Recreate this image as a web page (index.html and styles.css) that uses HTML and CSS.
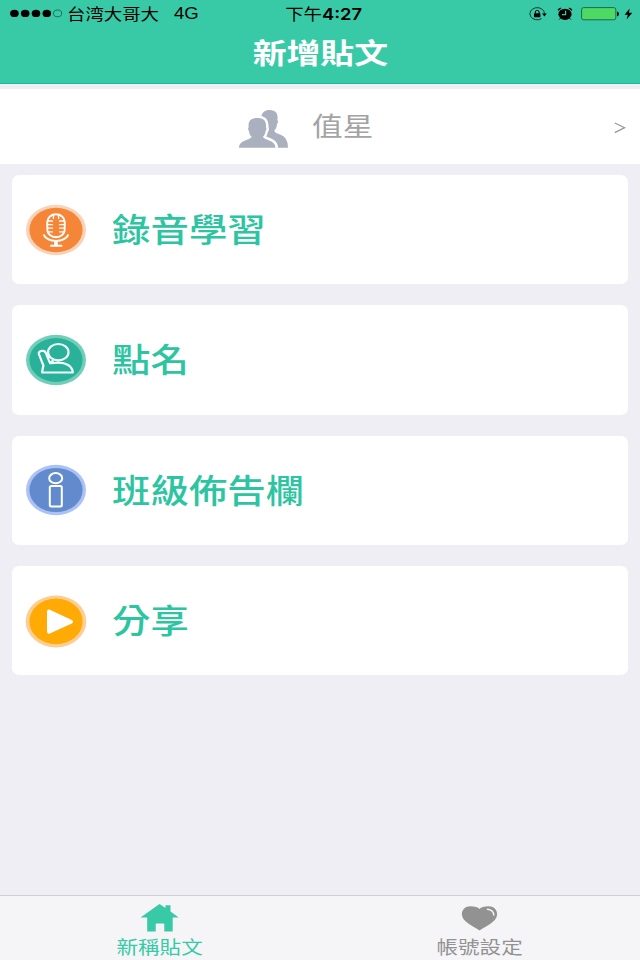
FILE: index.html
```html
<!DOCTYPE html>
<html lang="zh-Hant">
<head>
    <meta charset="UTF-8">
    <meta name="viewport" content="width=device-width, initial-scale=1.0">
    <title>新增貼文</title>
    <link rel="stylesheet" href="styles.css">
</head>
<body>
    <header class="header">
        <div class="status-bar">
            <div class="status-left">
                <svg class="signal" width="54" height="10" viewBox="0 0 54 10">
                    <ellipse cx="4.4" cy="4.4" rx="4.3" ry="3.6"/>
                    <ellipse cx="15.2" cy="4.4" rx="4.3" ry="3.6"/>
                    <ellipse cx="26" cy="4.4" rx="4.3" ry="3.6"/>
                    <ellipse cx="36.8" cy="4.4" rx="4.3" ry="3.6"/>
                    <ellipse cx="47.6" cy="4.4" rx="4.1" ry="3.4" fill="none" stroke="#12463a" stroke-width="0.7"/>
                </svg>
                <span class="carrier">台湾大哥大</span>
                <span class="network">4G</span>
            </div>
            <span class="time"><span class="ampm">下午</span>4:27</span>
            <div class="status-right">
                <svg width="18" height="14" viewBox="0 0 18 14">
                    <path d="M12.6 11.6A7.3 6.1 0 1 1 15.5 6.8" fill="none" stroke="#0b2a22" stroke-width="0.9"/>
                    <path d="M13 6.4h4.8l-2.4 3z"/>
                    <rect x="5" y="6.2" width="6.4" height="4" rx="0.5"/>
                    <path d="M6.3 6.5V5a1.9 1.6 0 0 1 3.8 0v1.5" fill="none" stroke="#000" stroke-width="1"/>
                </svg>
                <svg class="alarm" width="16" height="14" viewBox="0 0 16 14">
                    <ellipse cx="8" cy="7.3" rx="6.6" ry="5.6"/>
                    <path d="M0.9 3Q1.5 1.2 3.8 1L4.2 1.2 1.4 3.4zM15.1 3Q14.5 1.2 12.2 1L11.8 1.2 14.6 3.4z" stroke="#000" stroke-width="0.5"/>
                    <path d="M3.6 11l-1.5 1.6M12.4 11l1.5 1.6" stroke="#000" stroke-width="0.8"/>
                    <path d="M8.6 3.8v3.8H5" fill="none" stroke="#38caa7" stroke-width="1.2"/>
                </svg>
                <svg class="battery" width="38" height="14" viewBox="0 0 38 14">
                    <rect x="0.6" y="0.6" width="34.2" height="12.2" rx="2" fill="#4cd964" stroke="#1c5c48" stroke-width="0.9"/>
                    <path d="M36 4.6q2 0.4 2 2.4t-2 2.4z"/>
                </svg>
                <svg class="bolt" width="9" height="12" viewBox="0 0 9 12">
                    <path d="M5.6 0.4L0.6 6.8h3.2L2.6 11.6 8.3 4.8H5z"/>
                </svg>
            </div>
        </div>
        <h1 class="title">新增貼文</h1>
    </header>

    <div class="class-picker">
        <svg class="people" width="50" height="40" viewBox="0 0 50 40">
            <path d="M20 38.7H49Q49 28 41 25.5 35.3 23.8 35.3 21.5C37.4 19.5 37.8 17.5 38 15 39.7 13.5 39 11.5 38.4 11 39.4 4.5 36.8 1 30.5 1 25.8 1 23 3.2 22 8.5L22 25z" fill="#aab0be"/>
            <path d="M0 38.7C0 31 11 31.4 12.6 27.7 10.7 26 10.2 24.4 10 22 8.7 20.7 9 18.7 9.7 18.2 8.8 12 12 8.9 18.3 8.9S27.8 12 26.9 18.2C27.6 18.7 27.8 20.7 26.6 22 26.3 24.4 25.8 26 24 27.7 25.5 31.4 36.5 31 36.5 38.7z" fill="none" stroke="#fff" stroke-width="5"/>
            <path d="M-1 38.7H37.5V41H-1z" fill="#fff"/>
            <path d="M0 38.7C0 31 11 31.4 12.6 27.7 10.7 26 10.2 24.4 10 22 8.7 20.7 9 18.7 9.7 18.2 8.8 12 12 8.9 18.3 8.9S27.8 12 26.9 18.2C27.6 18.7 27.8 20.7 26.6 22 26.3 24.4 25.8 26 24 27.7 25.5 31.4 36.5 31 36.5 38.7z" fill="#aab0be"/>
        </svg>
        <span class="class-name">值星</span>
        <svg class="chevron" width="12" height="12" viewBox="0 0 12 12">
            <path d="M0.8 1L10.6 5.7 0.8 10.6" fill="none" stroke="#999" stroke-width="1.3"/>
        </svg>
    </div>

    <main class="menu">
        <a class="card">
            <svg class="icon" width="62" height="54" viewBox="0 0 62 54">
                <ellipse cx="31" cy="27" rx="30" ry="25.3" fill="#f9d2b8"/>
                <ellipse cx="31" cy="27" rx="26.6" ry="22.3" fill="#f58638"/>
                <g fill="none" stroke="#fff" stroke-width="1.9" stroke-linecap="round">
                    <rect x="22.3" y="11.3" width="17.4" height="22.9" rx="8.7" ry="7.5"/>
                    <path d="M22.5 18h5M22.5 21.6h5M22.5 25.2h5M22.5 28.8h5M34.5 18h5M34.5 21.6h5M34.5 25.2h5M34.5 28.8h5M28.4 12v3.4M33.6 12v3.4" stroke-width="1.3"/>
                    <path d="M19 32.2C23 39.7 39 39.7 43 32.2"/>
                    <path d="M31 38v4.5" stroke-width="3.5" stroke-linecap="butt"/>
                    <path d="M26 42.8h10.5"/>
                </g>
            </svg>
            <span class="label">錄音學習</span>
        </a>
        <a class="card">
            <svg class="icon" width="62" height="54" viewBox="0 0 62 54">
                <ellipse cx="31" cy="27" rx="30" ry="25.3" fill="#73ceb9"/>
                <ellipse cx="31" cy="27" rx="26.6" ry="22" fill="#2ab19a"/>
                <g fill="none" stroke="#f2fffc" stroke-width="2.2" stroke-linejoin="round">
                    <ellipse cx="33.3" cy="19.2" rx="10.2" ry="8.2"/>
                    <path d="M17.2 39.5H47.8C47.5 33 40.5 29.4 33 29.6 29 29.7 27.5 30.5 25 30.2L20.6 19.5C19.6 16.8 13.2 17.5 13.8 20.8L18.4 32.5C18 35 17.2 37 17.2 39.5zM22.6 25L24.6 22M25 30.2L28.4 27.4"/>
                </g>
            </svg>
            <span class="label">點名</span>
        </a>
        <a class="card">
            <svg class="icon" width="62" height="54" viewBox="0 0 62 54">
                <ellipse cx="31" cy="27" rx="30" ry="25.3" fill="#acc2f7"/>
                <ellipse cx="31" cy="27" rx="26.6" ry="22.1" fill="#618bcd"/>
                <g fill="none" stroke="#fff" stroke-width="2">
                    <ellipse cx="30.7" cy="15.2" rx="6.5" ry="5.1"/>
                    <rect x="24.8" y="23.1" width="12" height="20.5" rx="1.5"/>
                </g>
            </svg>
            <span class="label">班級佈告欄</span>
        </a>
        <a class="card">
            <svg class="icon" width="62" height="54" viewBox="0 0 62 54">
                <ellipse cx="31" cy="27.4" rx="30.3" ry="26" fill="#fdce94"/>
                <ellipse cx="31" cy="27.4" rx="26.6" ry="22.8" fill="#ffaa05"/>
                <path d="M24 17.6V37.8L46 27.8z" fill="#fff" stroke="#fff" stroke-width="4" stroke-linejoin="round"/>
            </svg>
            <span class="label">分享</span>
        </a>
    </main>

    <nav class="tab-bar">
        <a class="tab active">
            <svg width="40" height="30" viewBox="0 0 40 30">
                <path d="M19.5 1L25.5 5V2.2h5V8.4L38.7 14.6H32.7V28.5H24.3V21.2Q24.3 20.5 23.6 20.5H16.4Q15.7 20.5 15.7 21.2V28.5H7.2V14.6H0.5z"/>
            </svg>
            <span class="tab-label">新稱貼文</span>
        </a>
        <a class="tab">
            <svg width="40" height="30" viewBox="0 0 40 30">
                <path d="M19.5 27.5C15 24.5 10 22.3 5.5 18.3-1.5 12 2.5 3.3 10.3 3.3 15 3.3 18 4.2 19.5 6 21 4.2 24 3.3 28.7 3.3 36.5 3.3 40.5 12 33.5 18.3 29 22.3 24 24.5 19.5 27.5z"/>
                <path d="M27.5 6.2Q33.5 6.8 33.8 12" fill="none" stroke="#f5f5f8" stroke-width="1.5" stroke-linecap="round"/>
            </svg>
            <span class="tab-label">帳號設定</span>
        </a>
    </nav>
</body>
</html>
```

FILE: styles.css
```css
* {
    box-sizing: border-box;
}
body {
    margin: 0;
    height: 960px;
    display: flex;
    flex-direction: column;
    background-color: #efeef4;
    font-family: "Noto Sans CJK TC", sans-serif;
    overflow: hidden;
}
svg {
    display: block;
    flex: none;
}
span {
    white-space: nowrap;
}
.header {
    height: 84px;
    display: flex;
    flex-direction: column;
    background-color: #38caa7;
    border-bottom: 1px solid #1fba93;
}
.status-bar {
    height: 27px;
    padding: 0 7px 0 10px;
    display: grid;
    grid-template-columns: 1fr auto 1fr;
    align-items: center;
    font-size: 15.6px;
    line-height: 27px;
    color: #000;
}
.status-left, .status-right {
    display: flex;
    align-items: center;
}
.status-right {
    justify-content: flex-end;
}
.carrier {
    font-family: "Noto Sans CJK SC", sans-serif;
    margin-left: 3px;
    margin-bottom: 1px;
    transform: scaleX(1.18);
    transform-origin: left;
}
.network {
    font-family: "Liberation Sans", sans-serif;
    font-size: 16px;
    margin-left: 29px;
    margin-bottom: 1px;
    transform: scaleX(1.16);
    transform-origin: left;
}
.time {
    margin-left: 4px;
    font-family: Inter, sans-serif;
    font-size: 15.6px;
    font-weight: 600;
    transform: scaleX(1.18);
}
.ampm {
    font-family: "Noto Sans CJK TC", sans-serif;
    font-weight: 400;
}
.alarm {
    margin-left: 10px;
}
.battery {
    margin-left: 8px;
}
.bolt {
    margin-left: 5px;
}
.title {
    margin: 0;
    align-self: center;
    font-size: 28.7px;
    font-weight: 700;
    line-height: 49px;
    color: #fff;
    transform: scaleX(1.18);
}
.class-picker {
    height: 75px;
    margin-top: 5px;
    padding: 0 14px 0 239px;
    display: flex;
    align-items: center;
    background-color: #fff;
}
.people {
    margin-top: 4px;
}
.class-name {
    margin-left: 23px;
    margin-bottom: 4px;
    font-size: 26px;
    font-weight: 400;
    color: #a3a3a3;
    transform: scaleX(1.18);
    transform-origin: left;
}
.chevron {
    margin-left: auto;
    margin-top: 2px;
}
.menu {
    flex: 1;
    padding: 11px 12px;
    display: flex;
    flex-direction: column;
    gap: 21px;
}
.card {
    height: 109.3px;
    padding-left: 12.5px;
    display: flex;
    align-items: center;
    gap: 25px;
    background-color: #fff;
    border-radius: 7px;
}
.label {
    margin-bottom: 3px;
    font-size: 32.6px;
    font-weight: 500;
    line-height: 40px;
    color: #2dc5a1;
    transform: scaleX(1.18);
    transform-origin: left;
}
.tab-bar {
    height: 65px;
    padding-top: 7px;
    display: grid;
    grid-template-columns: 1fr 1fr;
    background-color: #f5f5f8;
    border-top: 1px solid #cfced4;
}
.tab {
    display: flex;
    flex-direction: column;
    align-items: center;
    color: #929292;
    fill: #929292;
}
.tab.active {
    color: #38caa7;
    fill: #38caa7;
}
.tab-label {
    font-size: 18.3px;
    line-height: 27px;
    transform: scaleX(1.18);
}
```
